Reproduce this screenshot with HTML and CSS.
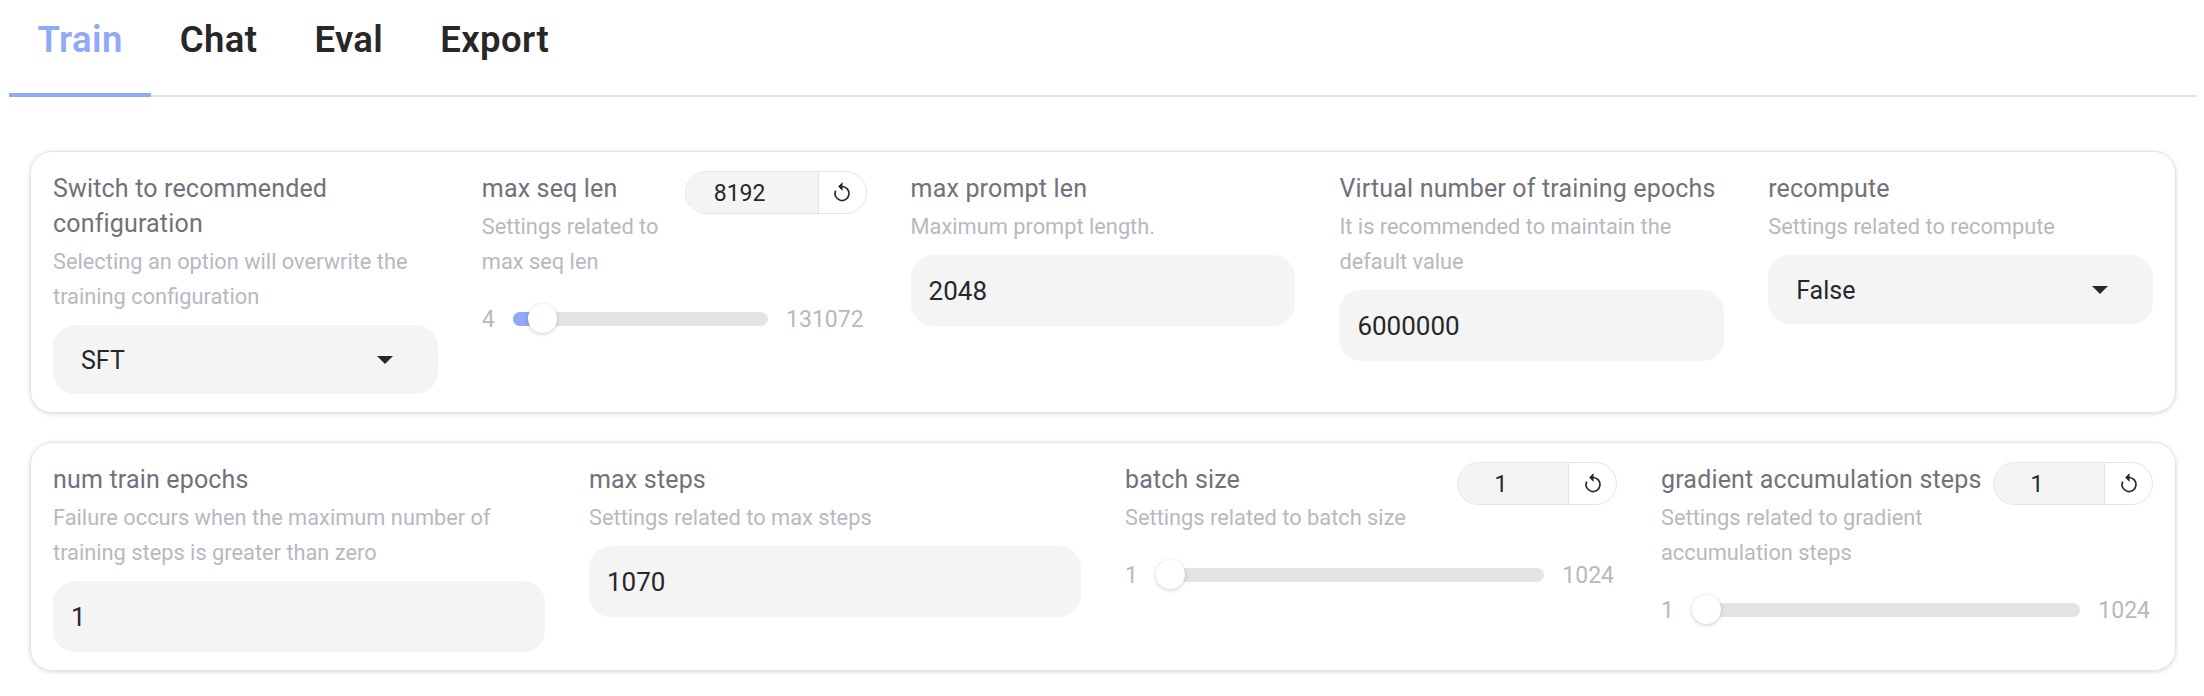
FILE: index.html
```html
<!DOCTYPE html>
<html lang="en">
<head>
    <meta charset="UTF-8">
    <title>Train</title>
    <link rel="stylesheet" href="styles.css">
</head>
<body>

    <div class="tabs">
        <div class="tab active">Train</div>
        <div class="tab">Chat</div>
        <div class="tab">Eval</div>
        <div class="tab">Export</div>
    </div>

    <div class="card cols-5">
        <div class="field">
            <div class="label">Switch to recommended configuration</div>
            <div class="desc">Selecting an option will overwrite the training configuration</div>
            <div class="select">SFT<span class="caret"></span></div>
        </div>

        <div class="field">
            <div class="head">
                <div class="head-text">
                    <div class="label">max seq len</div>
                    <div class="desc">Settings related to max seq len</div>
                </div>
                <div class="stepper">
                    <div class="stepper-value">8192</div>
                    <div class="stepper-reset">
                        <svg viewBox="0 0 24 24"><path d="M12 7.5a7 7 0 1 1-6.4 4.2"/><path class="arrow" d="M12.5 3.6 8.6 7.5l3.9 3.9"/></svg>
                    </div>
                </div>
            </div>
            <div class="slider">
                <span class="bound">4</span>
                <div class="track">
                    <div class="fill"></div>
                    <div class="thumb"></div>
                </div>
                <span class="bound">131072</span>
            </div>
        </div>

        <div class="field">
            <div class="label">max prompt len</div>
            <div class="desc">Maximum prompt length.</div>
            <div class="input">2048</div>
        </div>

        <div class="field">
            <div class="label">Virtual number of training epochs</div>
            <div class="desc">It is recommended to maintain the default value</div>
            <div class="input">6000000</div>
        </div>

        <div class="field">
            <div class="label">recompute</div>
            <div class="desc">Settings related to recompute</div>
            <div class="select">False<span class="caret"></span></div>
        </div>
    </div>

    <div class="card cols-4">
        <div class="field">
            <div class="label">num train epochs</div>
            <div class="desc">Failure occurs when the maximum number of training steps is greater than zero</div>
            <div class="input">1</div>
        </div>

        <div class="field">
            <div class="label">max steps</div>
            <div class="desc">Settings related to max steps</div>
            <div class="input">1070</div>
        </div>

        <div class="field">
            <div class="head">
                <div class="head-text">
                    <div class="label">batch size</div>
                    <div class="desc">Settings related to batch size</div>
                </div>
                <div class="stepper small">
                    <div class="stepper-value">1</div>
                    <div class="stepper-reset">
                        <svg viewBox="0 0 24 24"><path d="M12 7.5a7 7 0 1 1-6.4 4.2"/><path class="arrow" d="M12.5 3.6 8.6 7.5l3.9 3.9"/></svg>
                    </div>
                </div>
            </div>
            <div class="slider">
                <span class="bound">1</span>
                <div class="track">
                    <div class="thumb at-start"></div>
                </div>
                <span class="bound">1024</span>
            </div>
        </div>

        <div class="field">
            <div class="head">
                <div class="head-text">
                    <div class="label">gradient accumulation steps</div>
                    <div class="desc">Settings related to gradient accumulation steps</div>
                </div>
                <div class="stepper small">
                    <div class="stepper-value">1</div>
                    <div class="stepper-reset">
                        <svg viewBox="0 0 24 24"><path d="M12 7.5a7 7 0 1 1-6.4 4.2"/><path class="arrow" d="M12.5 3.6 8.6 7.5l3.9 3.9"/></svg>
                    </div>
                </div>
            </div>
            <div class="slider">
                <span class="bound">1</span>
                <div class="track">
                    <div class="thumb at-start"></div>
                </div>
                <span class="bound">1024</span>
            </div>
        </div>
    </div>

</body>
</html>
```

FILE: styles.css
```css
body {
    font-family: Roboto, "Liberation Sans", sans-serif;
    background-color: #ffffff;
    color: #27272a;
    margin: 0;
    padding: 0 7px 0 9px;
}

.tabs {
    display: flex;
    height: 97px;
    box-sizing: border-box;
    border-bottom: 2px solid #e4e4e7;
    margin-bottom: 54px;
}

.tab {
    padding: 18px 28.5px 0;
    font-size: 36.5px;
    letter-spacing: 0.4px;
    line-height: 44px;
    font-weight: 600;
    height: 97px;
    box-sizing: border-box;
}

.tab.active {
    color: #90a9f8;
    border-bottom: 4px solid #90a9f8;
}

.card {
    display: grid;
    gap: 44px;
    margin: 0 21px 29px;
    padding: 19px 22px 18px;
    border: 1px solid #e4e4e7;
    border-radius: 22px;
    box-shadow: 0 1px 4px rgba(0, 0, 0, 0.16);
}

.cols-5 {
    grid-template-columns: repeat(5, minmax(0, 1fr));
}

.cols-4 {
    grid-template-columns: repeat(4, minmax(0, 1fr));
}

.label {
    color: #71717a;
    font-size: 25px;
    letter-spacing: 0.17px;
    line-height: 35px;
    margin-bottom: 3px;
}

.desc {
    color: #b8b8c0;
    font-size: 21.8px;
    line-height: 35px;
    margin-bottom: 11px;
}

.select,
.input {
    display: flex;
    align-items: center;
    background-color: #f4f4f4;
    border-radius: 22px;
    font-size: 26px;
    padding-top: 1px;
    box-sizing: border-box;
    color: #27272a;
}

.select {
    height: 69px;
    padding-left: 28px;
    padding-right: 45px;
    justify-content: space-between;
    font-size: 25px;
}

.input {
    height: 71px;
    padding-left: 18px;
    padding-right: 18px;
}

.caret {
    border-left: 8px solid transparent;
    border-right: 8px solid transparent;
    border-top: 8px solid #27272a;
}

.head {
    display: flex;
    align-items: flex-start;
    gap: 6px;
}

.head-text {
    flex: 1;
    min-width: 0;
}

.stepper {
    flex: none;
    display: flex;
    width: 182px;
    height: 43px;
    box-sizing: border-box;
    border: 1px solid #e4e4e7;
    border-radius: 22px;
    overflow: hidden;
}

.stepper.small {
    width: 160px;
}

.stepper-value {
    flex: 1;
    background-color: #f4f4f4;
    font-size: 23px;
    line-height: 43px;
    text-align: center;
    padding-right: 24px;
}

.stepper-reset {
    flex: none;
    width: 47px;
    display: flex;
    align-items: center;
    justify-content: center;
    border-left: 1px solid #e4e4e7;
}

.stepper-reset svg {
    width: 24px;
    height: 24px;
    margin-bottom: 4px;
    fill: none;
    stroke: #27272a;
    stroke-width: 1.7;
}

.stepper-reset .arrow {
    fill: #27272a;
    stroke-width: 0.8;
}

.slider {
    display: flex;
    align-items: center;
    height: 36px;
    margin-top: 11px;
    padding-right: 3px;
    gap: 18px;
}

.bound {
    color: #b8b8c0;
    font-size: 23px;
}

.track {
    position: relative;
    flex: 1;
    height: 14px;
    border-radius: 7px;
    background-color: #e4e4e7;
}

.fill {
    width: 30px;
    height: 14px;
    border-radius: 7px;
    background-color: #90a9f8;
}

.thumb {
    position: absolute;
    left: 15px;
    top: -8px;
    width: 29px;
    height: 29px;
    border-radius: 50%;
    background-color: #ffffff;
    box-shadow: 0 1px 4px rgba(0, 0, 0, 0.2);
}

.thumb.at-start {
    left: 0;
}
```
